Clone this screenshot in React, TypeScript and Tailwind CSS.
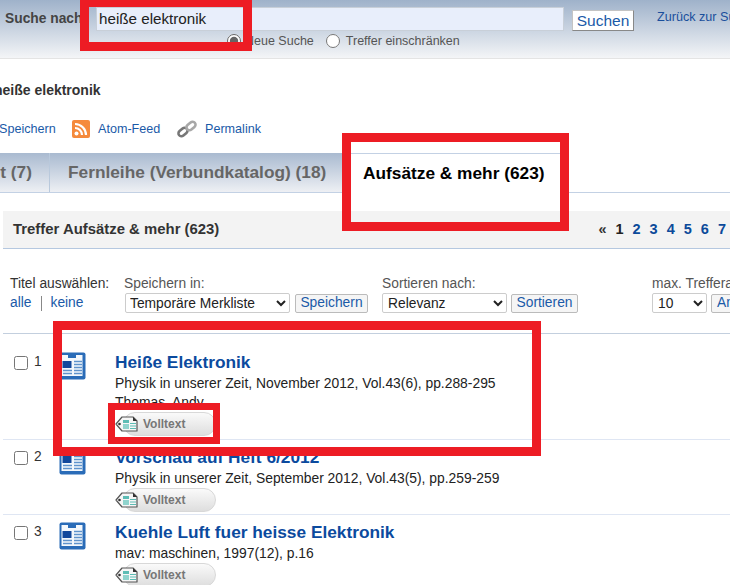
const results = [
  { n: 1, title: "Heiße Elektronik", source: "Physik in unserer Zeit, November 2012, Vol.43(6), pp.288-295", author: "Thomas, Andy" },
  { n: 2, title: "Vorschau auf Heft 6/2012", source: "Physik in unserer Zeit, September 2012, Vol.43(5), pp.259-259" },
  { n: 3, title: "Kuehle Luft fuer heisse Elektronik", source: "mav: maschinen, 1997(12), p.16" },
]

function DocIcon() {
  return (
    <svg width="27" height="28" viewBox="0 0 27 28" className="block">
      <rect x="0.5" y="0.5" width="26" height="27" rx="2" fill="#2a6cb8" />
      <rect x="2.5" y="3" width="21" height="21" fill="#f4f8fc" />
      <rect x="9" y="3" width="8" height="3" fill="#2a6cb8" />
      <rect x="3.5" y="9" width="9" height="7" fill="#12489c" />
      <path d="M15 9.5h8M15 12.5h8M15 15.5h8M15 18.5h8M15 21.5h8M4 18.5h9M4 21.5h9" stroke="#5f93cc" strokeWidth="1.5" />
    </svg>
  )
}

function TagIcon() {
  return (
    <svg width="24" height="20" viewBox="0 0 24 20" className="block">
      <path d="M7 3h11l4 4v10H7L1 10z" fill="#f6f6f6" stroke="#555" strokeWidth="1.2" strokeLinejoin="round" />
      <circle cx="4.5" cy="10" r="1.3" fill="#333" />
      <rect x="8" y="6" width="6" height="3" fill="#5cbcb4" />
      <rect x="8" y="10" width="6" height="5" fill="#8fd3cd" />
      <path d="M15 9.5h6M15 12h6M15 14.5h6" stroke="#5cbcb4" strokeWidth="1" />
      <path d="M18 3v4h4" fill="#333" />
    </svg>
  )
}

function Volltext() {
  return (
    <div className="relative w-[101px] h-[24px]">
      <div className="absolute left-[8px] right-0 top-0 bottom-0 rounded-[12px] border border-[#d8d8d8] bg-gradient-to-b from-[#fafafa] to-[#dedede]" />
      <div className="absolute left-0 top-[2px]">
        <TagIcon />
      </div>
      <span className="absolute left-[28px] top-[3px] text-[12px] leading-[18px] font-bold text-[#777]">Volltext</span>
    </div>
  )
}

function RssIcon() {
  return (
    <svg width="18" height="18" viewBox="0 0 18 18" className="block shrink-0">
      <rect width="18" height="18" rx="2" fill="#f58a3c" />
      <circle cx="4.5" cy="13.5" r="2" fill="#fff" />
      <path d="M3 8a7 7 0 0 1 7 7M3 4a11 11 0 0 1 11 11" fill="none" stroke="#fff" strokeWidth="2.2" />
    </svg>
  )
}

function ChainIcon() {
  return (
    <svg width="20" height="18" viewBox="0 0 20 18" className="block shrink-0">
      <g fill="none" strokeWidth="2.6" strokeLinecap="round">
        <rect x="1" y="9" width="10" height="6" rx="3" stroke="#777" transform="rotate(-40 6 12)" />
        <rect x="9" y="3" width="10" height="6" rx="3" stroke="#a8a8a8" transform="rotate(-40 14 6)" />
      </g>
    </svg>
  )
}

export default function App() {
  return (
    <div className="relative w-[730px] h-[585px] overflow-hidden bg-white font-['Liberation_Sans',Arial,sans-serif] text-[#333]">
      {/* search header */}
      <div className="h-[59px] border-b border-[#e4e4e4] bg-gradient-to-b from-[#9fb2ca] to-[#f4f5f7] pl-[5px] pt-[7px] flex items-start whitespace-nowrap overflow-hidden">
        <span className="w-[91px] shrink-0 pt-[4px] text-[13.8px] leading-[16px] font-bold text-[#444]">Suche nach</span>
        <div className="w-[468px] shrink-0">
          <div className="h-[24px] border border-[#c8cfd8] bg-[#e8eefb] pl-[2px] text-[15.2px] leading-[22px] text-[#222]">heiße elektronik</div>
          <div className="flex items-center pl-[131px] pt-[3px] text-[12.5px] leading-[14px] text-[#555]">
            <input type="radio" name="mode" defaultChecked className="w-[14px] h-[14px] m-0 accent-[#666]" />
            <span className="ml-[4px]">Neue Suche</span>
            <input type="radio" name="mode" className="w-[14px] h-[14px] m-0 ml-[12px]" />
            <span className="ml-[6px]">Treffer einschränken</span>
          </div>
        </div>
        <button className="ml-[8px] mt-[3px] w-[62px] h-[21px] shrink-0 bg-white border border-[#c4c4c4] border-b-[#888] border-r-[#888] text-[15.5px] leading-[18px] text-[#1a5aa8]">Suchen</button>
        <a className="ml-[23px] mt-[3px] text-[12.6px] leading-[15px] text-[#1a4f9c]">Zurück zur Suche</a>
      </div>

      {/* query + tools */}
      <div className="ml-[-6px] pt-[23px] text-[14px] leading-[16px] font-bold whitespace-nowrap">heiße elektronik</div>
      <div className="flex items-center h-[18px] mt-[22px] ml-[-1px] text-[12.6px] text-[#1a5aa8] whitespace-nowrap">
        <a className="w-[73px] shrink-0">Speichern</a>
        <RssIcon />
        <a className="ml-[8px] w-[79px] shrink-0">Atom-Feed</a>
        <ChainIcon />
        <a className="ml-[8px]">Permalink</a>
      </div>

      {/* tabs */}
      <div className="flex h-[40px] mt-[15px] border-b border-[#c3d1e4] whitespace-nowrap">
        <div className="w-[50px] shrink-0 flex justify-end items-center pr-[17px] border-r border-[#b9c9dc] bg-gradient-to-b from-[#a9bad0] to-[#eef0f4] text-[17.3px] font-bold text-[#666]">t (7)</div>
        <div className="w-[293px] shrink-0 flex items-center pl-[18px] bg-gradient-to-b from-[#a9bad0] to-[#eef0f4] text-[17.3px] font-bold text-[#666]">Fernleihe (Verbundkatalog) (18)</div>
        <div className="w-[217px] shrink-0 h-[40px] border-t border-[#c3d1e4] bg-white pl-[20px] pt-[9px] text-[17.3px] leading-[20px] font-bold text-black">Aufsätze &amp; mehr (623)</div>
      </div>

      {/* result header */}
      <div className="flex items-center justify-between h-[38px] ml-[3px] mt-[18px] border-b border-[#b5c8e0] bg-[#f3f3f3] pl-[10px] whitespace-nowrap">
        <span className="text-[14.9px] font-bold text-[#333]">Treffer Aufsätze &amp; mehr (623)</span>
        <div className="flex items-center gap-[9px] text-[14.5px] font-bold text-[#0c4a9a] pr-[4px]">
          <span className="text-[#333]">«</span>
          <span className="text-[#222]">1</span>
          <a>2</a>
          <a>3</a>
          <a>4</a>
          <a>5</a>
          <a>6</a>
          <a>7</a>
        </div>
      </div>

      {/* toolbar */}
      <div className="flex h-[85px] ml-[3px] pl-[7px] pt-[27px] border-b border-[#c3cfde] text-[13.8px] leading-[16px] text-[#555] whitespace-nowrap">
        <div className="w-[114px] shrink-0">
          <div className="text-[#333]">Titel auswählen:</div>
          <div className="mt-[3px] flex items-center text-[#1a5aa8]">
            <a>alle</a>
            <span className="ml-[10px] mr-[8px] h-[15px] border-l border-[#888]" />
            <a>keine</a>
          </div>
        </div>
        <div className="w-[258px] shrink-0">
          <div>Speichern in:</div>
          <div className="flex items-center gap-[5px] mt-[1px] ml-[1px]">
            <select className="w-[165px] h-[20px] shrink-0 bg-white border border-[#ccc] rounded-[2px] text-[13.8px] text-[#222]">
              <option>Temporäre Merkliste</option>
            </select>
            <button className="w-[73px] h-[19px] shrink-0 bg-[#f5f5f5] border border-[#bbb] rounded-[2px] text-[13.8px] leading-[16px] text-[#1a5aa8]">Speichern</button>
          </div>
        </div>
        <div className="w-[270px] shrink-0">
          <div>Sortieren nach:</div>
          <div className="flex items-center gap-[4px] mt-[1px]">
            <select className="w-[125px] h-[20px] shrink-0 bg-white border border-[#ccc] rounded-[2px] pl-[1px] text-[13.8px] text-[#222]">
              <option>Relevanz</option>
            </select>
            <button className="w-[67px] h-[19px] shrink-0 bg-[#f5f5f5] border border-[#bbb] rounded-[2px] text-[13.8px] leading-[16px] text-[#1a5aa8]">Sortieren</button>
          </div>
        </div>
        <div className="shrink-0">
          <div>max. Trefferanzahl:</div>
          <div className="flex items-center gap-[4px] mt-[1px]">
            <select className="w-[55px] h-[20px] shrink-0 bg-white border border-[#ccc] rounded-[2px] pl-[1px] text-[13.8px] text-[#222]">
              <option>10</option>
            </select>
            <button className="w-[60px] h-[19px] shrink-0 bg-[#f5f5f5] border border-[#bbb] rounded-[2px] pl-[5px] text-left text-[13.8px] leading-[16px] text-[#1a5aa8]">Anzeigen</button>
          </div>
        </div>
      </div>

      {/* results */}
      <div className="ml-[3px]">
        {results.map((r) => (
          <div
            key={r.n}
            className={r.n === 1 ? "flex pt-[17px] h-[106px] border-b border-[#dfe6f3]" : "flex pt-[6px] h-[75px] border-b border-[#dfe6f3]"}
          >
            <div className="w-[56px] shrink-0 flex items-start pl-[11px] pt-[3px] text-[13.8px] leading-[16px]">
              <input type="checkbox" className="w-[14px] h-[14px] m-0 mt-[2px]" />
              <span className="ml-[6px]">{r.n}</span>
            </div>
            <div className="w-[56px] shrink-0 pt-[1px]">
              <DocIcon />
            </div>
            <div className="whitespace-nowrap">
              <div className="text-[17.3px] leading-[22px] font-bold text-[#0b4a9e]">{r.title}</div>
              <div className="text-[13.87px] leading-[20px] text-[#222]">{r.source}</div>
              {r.author && <div className="text-[13.87px] leading-[19px] text-[#222]">{r.author}</div>}
              <Volltext />
            </div>
          </div>
        ))}
      </div>

      {/* red annotation boxes */}
      <div className="absolute left-[80px] top-[-2px] w-[172px] h-[53px] border-[9px] border-[#ed1c24]" />
      <div className="absolute left-[342px] top-[133px] w-[227px] h-[98px] border-[9px] border-[#ed1c24]" />
      <div className="absolute left-[53px] top-[321px] w-[488px] h-[135px] border-[9px] border-[#ed1c24]" />
      <div className="absolute left-[108px] top-[403px] w-[112px] h-[41px] border-[7px] border-[#ed1c24]" />
    </div>
  )
}
